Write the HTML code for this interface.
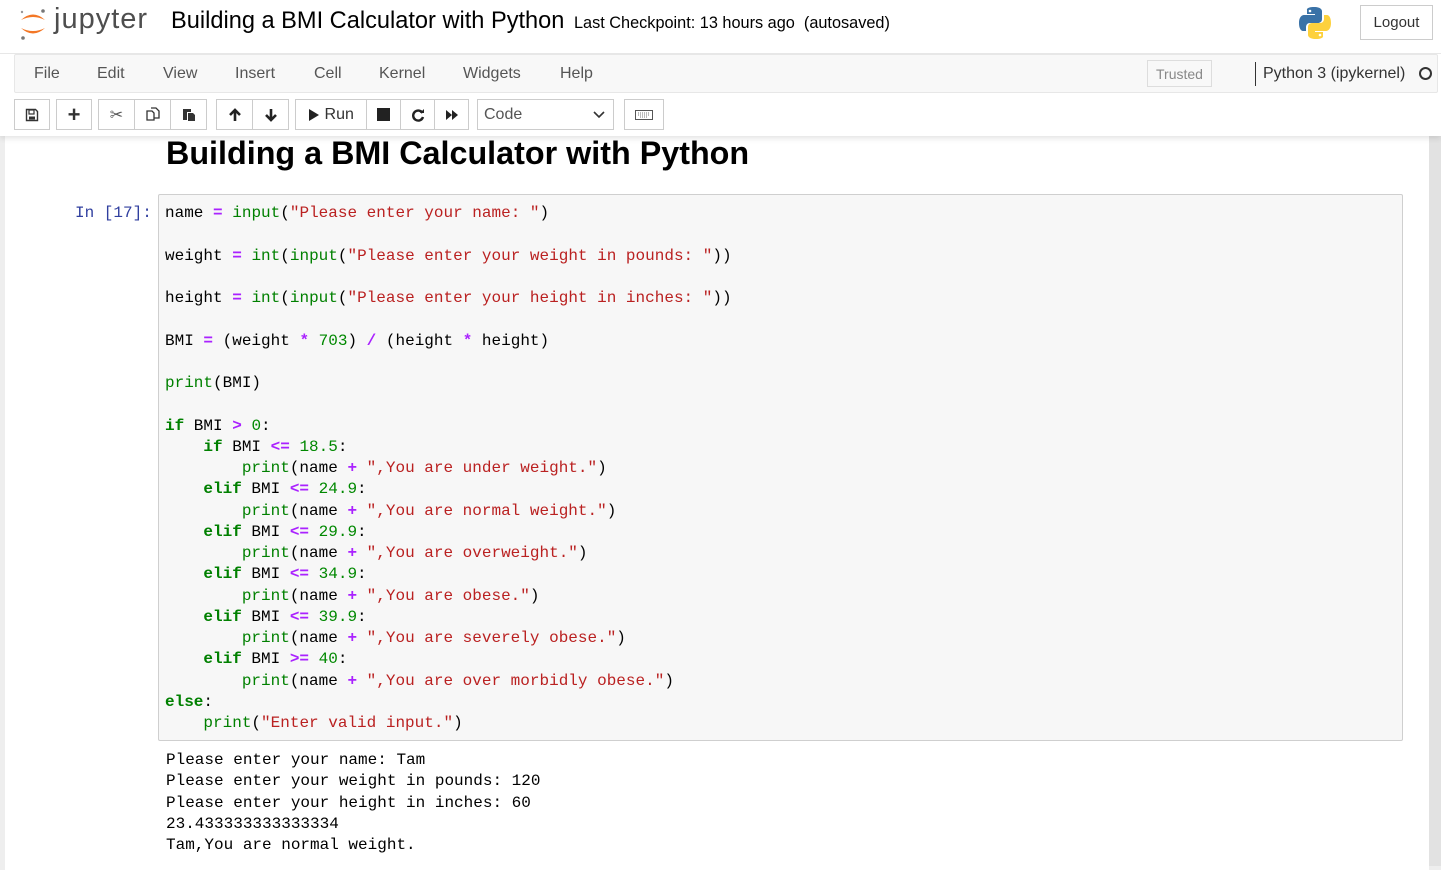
<!DOCTYPE html>
<html><head><meta charset="utf-8">
<style>
*{box-sizing:border-box;margin:0;padding:0}
body{width:1441px;height:866px;overflow:hidden;background:#eee;font-family:"Liberation Sans",Arial,sans-serif;position:relative}
#hdr{position:absolute;left:0;top:0;width:1441px;height:136px;background:#fff;box-shadow:0 2px 6px rgba(0,0,0,.12);z-index:2}
.abs{position:absolute}
.menu{position:absolute;left:14px;top:54px;width:1424px;height:39px;background:#f8f8f8;border:1px solid #e7e7e7;border-radius:2px}
.menu span{position:absolute;top:10px;font-size:16px;color:#555}
.btn{position:absolute;top:99px;height:31px;border:1px solid #ccc;background:#fff;display:flex;align-items:center;justify-content:center;color:#333}
.grp{position:absolute;top:99px;height:31px;display:flex}
.grp .b{border:1px solid #ccc;height:31px;display:flex;align-items:center;justify-content:center;background:#fff;margin-left:-1px}
#nb{position:absolute;left:5px;top:130px;width:1424px;height:740px;background:#fff}
#sb{position:absolute;left:1429px;top:136px;width:12px;height:730px;background:#e2e2e2}
pre,.mono{font-family:"Liberation Mono","DejaVu Sans Mono",monospace;font-size:16px;line-height:21.25px}
.k{color:#008000;font-weight:bold}.b2{color:#008000}.s{color:#ba2121}.o{color:#aa22ff;font-weight:bold}.n{color:#080}
</style></head><body>
<div id="nb"></div>
<div id="sb"></div>
<div id="hdr">
 <svg class="abs" style="left:18px;top:6px" width="30" height="36" viewBox="0 0 30 36">
  <path d="M3 14 Q15 3 27 14 Q15 8 3 14Z" fill="#f37726"/>
  <path d="M3 22 Q15 33 27 22 Q15 28 3 22Z" fill="#f37726"/>
  <circle cx="25" cy="5" r="1.8" fill="#767677"/><circle cx="4" cy="6" r="1.2" fill="#989798"/><circle cx="5" cy="32" r="1.8" fill="#767677"/>
 </svg>
 <div class="abs" style="left:54px;top:3px;font-size:29px;color:#4e4e4e;letter-spacing:1px">jupyter</div>
 <div class="abs" style="left:171px;top:8px;font-size:23.6px;color:#000">Building a BMI Calculator with Python</div>
 <div class="abs" style="left:574px;top:14px;font-size:16.3px;color:#000">Last Checkpoint: 13 hours ago &nbsp;(autosaved)</div>
 <svg class="abs" style="left:1297px;top:5px" width="36" height="36" viewBox="0 0 36 36">
  <path d="M17 2C9 2 10 5 10 5v4h8v1H7S2 10 2 18s4 8 4 8h3v-4s0-4 4-4h8s4 0 4-4V6s0-4-8-4z" fill="#3a72a7"/>
  <circle cx="13" cy="6" r="1.3" fill="#fff"/>
  <path d="M19 34c8 0 7-3 7-3v-4h-8v-1h11s5 0 5-8-4-8-4-8h-3v4s0 4-4 4h-8s-4 0-4 4v8s0 4 8 4z" fill="#fdd13d"/>
  <circle cx="23" cy="30" r="1.3" fill="#fff"/>
 </svg>
 <div class="abs" style="left:1360px;top:5px;width:73px;height:35px;border:1px solid #ccc;font-size:15px;color:#333;display:flex;align-items:center;justify-content:center">Logout</div>
 <div class="abs" style="left:0;top:53px;width:1441px;height:1px;background:#e7e7e7"></div>
 <div class="menu">
  <span style="left:19px">File</span><span style="left:82px">Edit</span><span style="left:148px">View</span><span style="left:220px">Insert</span><span style="left:299px">Cell</span><span style="left:364px">Kernel</span><span style="left:448px">Widgets</span><span style="left:545px">Help</span>
  <div class="abs" style="left:1132px;top:5px;width:65px;height:27px;border:1px solid #ddd;font-size:14px;color:#888;display:flex;align-items:center;justify-content:center">Trusted</div>
  <div class="abs" style="left:1240px;top:7px;width:1px;height:24px;background:#333"></div>
  <span style="left:1248px;color:#333">Python 3 (ipykernel)</span>
  <div class="abs" style="left:1404px;top:12px;width:13px;height:13px;border:2px solid #333;border-radius:50%"></div>
 </div>
 <div class="btn" style="left:14px;width:36px"><svg width="14" height="14" viewBox="0 0 14 14"><path d="M1.5 1.5h9l2 2v9h-11z" fill="none" stroke="#333" stroke-width="1.4"/><rect x="4" y="2" width="5" height="4" fill="none" stroke="#333" stroke-width="1.2"/><rect x="4" y="8.5" width="6" height="3" fill="#333"/></svg></div>
 <div class="btn" style="left:56px;width:36px;font-size:22px;font-weight:bold">+</div>
 <div class="grp" style="left:98px"><div class="b" style="width:37px;margin-left:0;color:#555">✂</div><div class="b" style="width:37px"><svg width="14" height="15" viewBox="0 0 14 15"><path d="M1 4h5l2 2v7H1z M5 1h5l3 3v7h-5" fill="none" stroke="#333" stroke-width="1.3"/></svg></div><div class="b" style="width:37px"><svg width="14" height="15" viewBox="0 0 14 15"><path d="M1 2h8v3H5v8H1z" fill="#333"/><path d="M6 6h5l2 2v6H6z" fill="#333"/></svg></div></div>
 <div class="grp" style="left:216px"><div class="b" style="width:37px;margin-left:0"><svg width="14" height="14" viewBox="0 0 14 14"><path d="M7 13V2M2 7l5-5 5 5" fill="none" stroke="#222" stroke-width="2.6"/></svg></div><div class="b" style="width:37px"><svg width="14" height="14" viewBox="0 0 14 14"><path d="M7 1v11M2 7l5 5 5-5" fill="none" stroke="#222" stroke-width="2.6"/></svg></div></div>
 <div class="grp" style="left:295px"><div class="b" style="width:72px;margin-left:0;font-size:16px;color:#333"><svg width="12" height="14" viewBox="0 0 12 14"><path d="M1 1l10 6-10 6z" fill="#222"/></svg>&nbsp;Run</div><div class="b" style="width:35px"><div style="width:13px;height:13px;background:#222"></div></div><div class="b" style="width:35px"><svg width="14" height="14" viewBox="0 0 14 14"><path d="M11.5 5A5 5 0 1 0 12 9" fill="none" stroke="#222" stroke-width="2.4"/><path d="M9 5h4V1z" fill="#222"/></svg></div><div class="b" style="width:35px"><svg width="14" height="12" viewBox="0 0 14 12"><path d="M1 1l6 5-6 5zM7 1l6 5-6 5z" fill="#222"/></svg></div></div>
 <div class="btn" style="left:477px;width:137px;justify-content:flex-start;padding-left:6px;font-size:16px;color:#555">Code<svg style="position:absolute;right:8px;top:11px" width="12" height="8" viewBox="0 0 12 8"><path d="M1 1l5 5 5-5" fill="none" stroke="#333" stroke-width="1.6"/></svg></div>
 <div class="btn" style="left:624px;width:40px"><svg width="18" height="10" viewBox="0 0 18 10"><rect x=".5" y=".5" width="17" height="9" fill="none" stroke="#555"/><path d="M3 3h12M3 5h12M5 7h8" stroke="#777" stroke-width="1" stroke-dasharray="1 1"/></svg></div>
</div>
<div class="abs" style="left:166px;top:135px;font-size:32.3px;font-weight:bold;color:#000;z-index:1">Building a BMI Calculator with Python</div>
<div class="abs mono" style="left:75px;top:203px;color:#303f9f">In [17]:</div>
<div class="abs" style="left:158px;top:194px;width:1245px;height:547px;background:#f7f7f7;border:1px solid #cfcfcf;border-radius:2px"></div>
<pre class="abs" style="left:165px;top:203px;color:#000">name <span class="o">=</span> <span class="b2">input</span>(<span class="s">"Please enter your name: "</span>)

weight <span class="o">=</span> <span class="b2">int</span>(<span class="b2">input</span>(<span class="s">"Please enter your weight in pounds: "</span>))

height <span class="o">=</span> <span class="b2">int</span>(<span class="b2">input</span>(<span class="s">"Please enter your height in inches: "</span>))

BMI <span class="o">=</span> (weight <span class="o">*</span> <span class="n">703</span>) <span class="o">/</span> (height <span class="o">*</span> height)

<span class="b2">print</span>(BMI)

<span class="k">if</span> BMI <span class="o">&gt;</span> <span class="n">0</span>:
    <span class="k">if</span> BMI <span class="o">&lt;=</span> <span class="n">18.5</span>:
        <span class="b2">print</span>(name <span class="o">+</span> <span class="s">",You are under weight."</span>)
    <span class="k">elif</span> BMI <span class="o">&lt;=</span> <span class="n">24.9</span>:
        <span class="b2">print</span>(name <span class="o">+</span> <span class="s">",You are normal weight."</span>)
    <span class="k">elif</span> BMI <span class="o">&lt;=</span> <span class="n">29.9</span>:
        <span class="b2">print</span>(name <span class="o">+</span> <span class="s">",You are overweight."</span>)
    <span class="k">elif</span> BMI <span class="o">&lt;=</span> <span class="n">34.9</span>:
        <span class="b2">print</span>(name <span class="o">+</span> <span class="s">",You are obese."</span>)
    <span class="k">elif</span> BMI <span class="o">&lt;=</span> <span class="n">39.9</span>:
        <span class="b2">print</span>(name <span class="o">+</span> <span class="s">",You are severely obese."</span>)
    <span class="k">elif</span> BMI <span class="o">&gt;=</span> <span class="n">40</span>:
        <span class="b2">print</span>(name <span class="o">+</span> <span class="s">",You are over morbidly obese."</span>)
<span class="k">else</span>:
    <span class="b2">print</span>(<span class="s">"Enter valid input."</span>)</pre>
<pre class="abs" style="left:166px;top:750px;color:#000">Please enter your name: Tam
Please enter your weight in pounds: 120
Please enter your height in inches: 60
23.433333333333334
Tam,You are normal weight.</pre>
</body></html>
